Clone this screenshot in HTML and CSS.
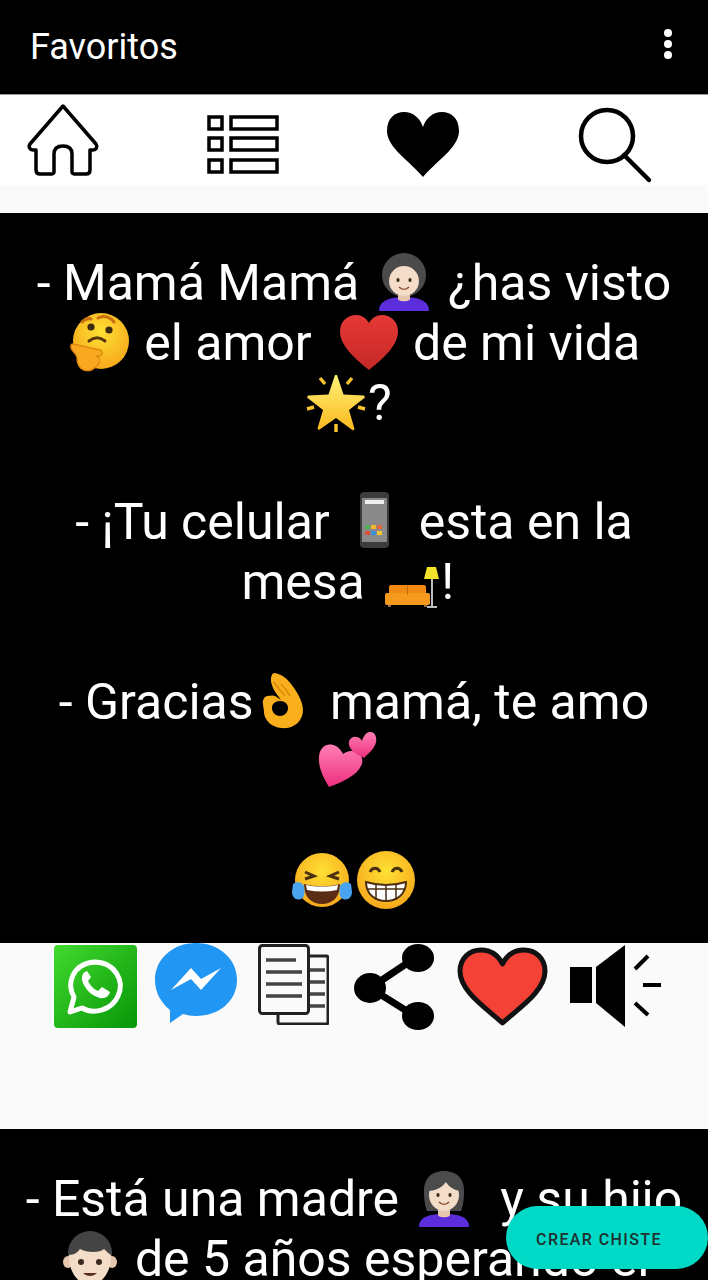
FILE: index.html
```html
<!DOCTYPE html>
<html lang="es">
<head>
    <meta charset="UTF-8">
    <title>Favoritos</title>
    <link rel="stylesheet" href="styles.css">
</head>
<body>
    <!-- emojis usados en los chistes -->
    <svg class="defs" aria-hidden="true">
        <defs>
            <radialGradient id="face-yellow" cx="50%" cy="35%" r="65%">
                <stop offset="0" stop-color="#fee133"/>
                <stop offset="1" stop-color="#f6a81c"/>
            </radialGradient>
            <linearGradient id="star-yellow" x1="0" y1="0" x2="0" y2="1">
                <stop offset="0" stop-color="#fff176"/>
                <stop offset="1" stop-color="#fbb91f"/>
            </linearGradient>
            <linearGradient id="heart-red" x1="0" y1="0" x2="0" y2="1">
                <stop offset="0" stop-color="#e53935"/>
                <stop offset="1" stop-color="#c62828"/>
            </linearGradient>
            <linearGradient id="heart-pink" x1="0" y1="0" x2="0" y2="1">
                <stop offset="0" stop-color="#ff7fb4"/>
                <stop offset="1" stop-color="#ec2f7f"/>
            </linearGradient>
            <linearGradient id="wa-green" x1="0" y1="0" x2="1" y2="1">
                <stop offset="0" stop-color="#43d92f"/>
                <stop offset="1" stop-color="#069607"/>
            </linearGradient>
            <symbol id="e-woman" viewBox="0 0 60 60">
                <path d="M5 58c0-10 10-14 25-14s25 4 25 14z" fill="#5b2ddb"/>
                <circle cx="30" cy="22" r="22" fill="#4b4b4b"/>
                <path d="M24 36h12v10c0 3-12 3-12 0z" fill="#e6c7ad"/>
                <ellipse cx="30" cy="28" rx="15" ry="15" fill="#f3dcc8"/>
                <ellipse cx="24" cy="27" rx="1.600" ry="2" fill="#3a2a20"/>
                <ellipse cx="36" cy="27" rx="1.600" ry="2" fill="#3a2a20"/>
                <path d="M25 34c3 3 7 3 10 0" fill="none" stroke="#8a4a35" stroke-width="1.600"/>
            </symbol>
            <symbol id="e-woman-long" viewBox="0 0 60 60">
                <path d="M5 58c0-10 10-13 25-13s25 3 25 13z" fill="#5b2ddb"/>
                <path d="M10 22C10 8 19 2 30 2s20 6 20 20c0 9-1 15-3 20H13c-2-5-3-11-3-20z" fill="#4b4b4b"/>
                <path d="M24 36h12v10c0 3-12 3-12 0z" fill="#e6c7ad"/>
                <ellipse cx="30" cy="26" rx="15" ry="16" fill="#f3dcc8"/>
                <path d="M14 22c6 0 14-3 18-9 3 5 8 8 14 9l1-8-14-8-17 4z" fill="#4b4b4b"/>
                <ellipse cx="24" cy="26" rx="1.600" ry="2" fill="#3a2a20"/>
                <ellipse cx="36" cy="26" rx="1.600" ry="2" fill="#3a2a20"/>
                <path d="M25 33c3 3 7 3 10 0" fill="none" stroke="#8a4a35" stroke-width="1.600"/>
            </symbol>
            <symbol id="e-boy" viewBox="0 0 60 60">
                <circle cx="30" cy="24" r="22" fill="#444"/>
                <ellipse cx="8" cy="33" rx="5" ry="6" fill="#e6c7ad"/>
                <ellipse cx="52" cy="33" rx="5" ry="6" fill="#e6c7ad"/>
                <path d="M9 26c5 0 9-3 11-6 7 4 20 4 24 0 3 3 5 5 7 6 1 14-8 30-21 30S8 40 9 26z" fill="#f3dcc8"/>
                <circle cx="21" cy="33" r="3" fill="#3a2a20"/>
                <circle cx="39" cy="33" r="3" fill="#3a2a20"/>
                <path d="M23 44c4 4 10 4 14 0z" fill="#5a2c20"/>
            </symbol>
            <symbol id="e-think" viewBox="0 0 60 60">
                <circle cx="31" cy="28" r="28" fill="url(#face-yellow)"/>
                <path d="M12 9c3-3 6-4 9-3M28 5c6-3 12-1 16 4" fill="none" stroke="#c96f12" stroke-width="3" stroke-linecap="round"/>
                <circle cx="21" cy="14" r="3.600" fill="#3b2b12"/>
                <circle cx="39" cy="17" r="3.600" fill="#3b2b12"/>
                <path d="M19 28c5-4 11-4 16 0" fill="none" stroke="#5a3512" stroke-width="3" stroke-linecap="round"/>
                <path d="M3 31l27 6c3 1 3 5 0 6l-4 0c4 1 4 5 3 7-3 6-10 9-15 7-6-2-7-9-7-13-1-4-7-7-6-11 0-2 1-2 2-2z" fill="#f8a91f" stroke="#e08a10" stroke-width="1.400"/>
            </symbol>
            <symbol id="e-heart" viewBox="0 0 60 60">
                <path d="M30 57C14 44 1 32 1 18 1 8 9 2 17 2c6 0 10 3 13 8 3-5 7-8 13-8 8 0 16 6 16 16 0 14-13 26-29 39z" fill="url(#heart-red)"/>
            </symbol>
            <symbol id="e-star" viewBox="0 0 60 60">
                <path d="M29 2h2l6.500 19.500L58 22.500l1 2-16 12.500 5.500 19-1.500 1.500L30 45 13 57l-1.500-1.500L17 37 1 24.500l1-2 20.500-1z" fill="url(#star-yellow)"/>
                <path d="M14 5l5 6M46 5l-5 6M1 36l7-2M59 36l-7-2M30 51v8" fill="none" stroke="#fdc42b" stroke-width="3.400"/>
            </symbol>
            <symbol id="e-phone" viewBox="0 0 60 60">
                <rect x="16" y="0" width="29" height="56" rx="4" fill="#3c3c3c"/>
                <rect x="18" y="6" width="25" height="44" fill="#8a8a8a"/>
                <rect x="21" y="8" width="19" height="4" fill="#eee"/>
                <path d="M21 33h5v4h-5z" fill="#4caf50"/>
                <path d="M27 33h5v4h-5z" fill="#f2b632"/>
                <path d="M33 33h5v4h-5z" fill="#e2683b"/>
                <path d="M21 39h5v4h-5z" fill="#d9503f"/>
                <path d="M27 39h5v4h-5z" fill="#3f8fd9"/>
                <path d="M33 39h5v4h-5z" fill="#f2c832"/>
            </symbol>
            <symbol id="e-couch" viewBox="0 0 60 60">
                <rect x="10" y="33" width="37" height="14" rx="2" fill="#f08a10"/>
                <rect x="6" y="41" width="45" height="12" rx="2" fill="#f59a1d"/>
                <path d="M28 33h1v10h-1z" fill="#c96d08"/>
                <path d="M9 53h3v2H9zM45 53h3v2h-3z" fill="#8a6a4a"/>
                <path d="M48 15h9l3 12H45z" fill="#f4e12a"/>
                <rect x="52" y="27" width="2" height="27" fill="#bdbdbd"/>
                <rect x="48" y="54" width="10" height="2" fill="#bdbdbd"/>
            </symbol>
            <symbol id="e-ok" viewBox="0 0 60 60">
                <path fill-rule="evenodd" d="M18 1c8 1 14 6 20 15 7 10 11 20 8 28-3 9-12 13-21 12-9-1-16-7-17-15 0-4-1-7-1-9-1-4 2-9 7-8 3-1 6 0 8 2l3 2c-2-3-8-10-9-15-2-5-1-11 2-12zM24 29c-5 0-8 3-8 7s3 8 8 8 8-4 8-8-3-7-8-7z" fill="#f9ae1b"/>
                <path d="M25 12c3 3 6 7 9 12M18 10c3 5 8 10 11 14" fill="none" stroke="#dc8a0c" stroke-width="1.500"/>
            </symbol>
            <symbol id="e-hearts" viewBox="0 0 60 60">
                <path d="M11 56C5 46 0 36 1 25c1-8 7-13 14-11 5 1 8 5 10 9 4-3 9-4 13-2 6 2 8 9 5 14-4 9-18 16-32 21z" fill="url(#heart-pink)"/>
                <path d="M46 27c-6-3-13-6-15-13-1-5 3-9 7-8 3 0 5 2 6 4 1-4 4-9 8-9 5 0 7 5 6 10-1 6-7 11-12 16z" fill="url(#heart-pink)"/>
            </symbol>
            <symbol id="e-joy" viewBox="0 0 60 60">
                <circle cx="30" cy="29" r="27" fill="url(#face-yellow)"/>
                <path d="M13 21l9 4-9 3M47 21l-9 4 9 3" fill="none" stroke="#4a2f10" stroke-width="3"/>
                <path d="M12 33c10 3 26 3 36 0 0 14-8 20-18 20s-18-6-18-20z" fill="#5a2c14"/>
                <path d="M14 34c10 2 22 2 32 0l-1 5c-10 2-20 2-30 0z" fill="#fff"/>
                <path d="M1 33c4-3 9-2 11 2 1 5 1 12-3 13-5 2-9-2-9-7zM59 33c-4-3-9-2-11 2-1 5-1 12 3 13 5 2 9-2 9-7z" fill="#4aa3ee"/>
            </symbol>
            <symbol id="e-grin" viewBox="0 0 60 60">
                <circle cx="30" cy="29" r="29" fill="url(#face-yellow)"/>
                <path d="M14 21c2-5 8-5 10 0M36 21c2-5 8-5 10 0" fill="none" stroke="#4a2f10" stroke-width="3"/>
                <path d="M10 31c13 4 27 4 40 0 0 12-9 19-20 19S10 43 10 31z" fill="#fff" stroke="#4a2f10" stroke-width="2"/>
                <path d="M11 38h38M20 34v15M30 35v16M40 34v15" stroke="#4a2f10" stroke-width="1.500"/>
            </symbol>
        </defs>
    </svg>

    <div class="toolbar">
        <span class="toolbar-title">Favoritos</span>
        <div class="menu-dots"><i></i><i></i><i></i></div>
    </div>

    <div class="nav-bar">
        <svg class="nav-icon" viewBox="0 0 72 72">
            <path d="M36 2L69 40c2 3 0 6-3 6h-3v20c0 3-2 4-4 4H47c-1 0-2-1-2-2V50c0-6-4-8-9-8s-9 2-9 8v18c0 1-1 2-2 2H13c-2 0-4-1-4-4V46H6c-3 0-5-3-3-6z" fill="none" stroke="#000" stroke-width="3.500" stroke-linejoin="round"/>
        </svg>
        <svg class="nav-icon" viewBox="0 0 72 72">
            <g fill="none" stroke="#000" stroke-width="3.500">
                <rect x="2" y="13" width="13" height="12"/>
                <rect x="2" y="34" width="13" height="12"/>
                <rect x="2" y="56" width="13" height="12"/>
                <rect x="24" y="13" width="46" height="12"/>
                <rect x="24" y="34" width="46" height="12"/>
                <rect x="24" y="56" width="46" height="12"/>
            </g>
        </svg>
        <svg class="nav-icon" viewBox="0 0 72 72">
            <path d="M36 73C24 58 0 44 0 27 0 14 8 8 17 8c9 0 16 6 19 15C39 14 46 8 55 8c9 0 17 6 17 19 0 17-24 31-36 46z"/>
        </svg>
        <svg class="nav-icon search-icon" viewBox="0 0 72 74">
            <circle cx="28" cy="28" r="26" fill="none" stroke="#000" stroke-width="4.500"/>
            <path d="M45 47l25 25" fill="none" stroke="#000" stroke-width="4.500" stroke-linecap="round"/>
        </svg>
    </div>

    <div class="joke-list">
        <div class="joke">
            <p class="joke-text">- Mamá Mamá <svg class="emoji"><use href="#e-woman"/></svg> ¿has visto<br>
            <svg class="emoji"><use href="#e-think"/></svg> el amor&nbsp; <svg class="emoji"><use href="#e-heart"/></svg> de mi vida<br>
            <svg class="emoji"><use href="#e-star"/></svg>?&nbsp;<br>
            <br>
            - ¡Tu celular <svg class="emoji"><use href="#e-phone"/></svg> esta en la<br>
            mesa <svg class="emoji"><use href="#e-couch"/></svg>!&nbsp;<br>
            <br>
            - Gracias<svg class="emoji"><use href="#e-ok"/></svg> mamá, te amo<br>
            <svg class="emoji"><use href="#e-hearts"/></svg>&nbsp;<br>
            <br>
            <svg class="emoji"><use href="#e-joy"/></svg><svg class="emoji"><use href="#e-grin"/></svg></p>
        </div>

        <div class="joke-actions">
            <svg class="act act-whatsapp" viewBox="0 0 83 83">
                <rect width="83" height="83" rx="4" fill="url(#wa-green)"/>
                <path d="M16 67l4-15c-8-14-1-33 20-35 21 0 31 19 24 34-6 14-24 19-36 12z" fill="none" stroke="#fff" stroke-width="5" stroke-linejoin="round"/>
                <path d="M31 27c-3 2-4 6-2 11 3 7 9 13 17 15 5 1 9-2 10-6l-8-5-4 4c-5-2-8-6-10-10l3-4-4-6z" fill="#fff"/>
            </svg>
            <svg class="act act-messenger" viewBox="0 0 82 80">
                <path d="M41 0c23 0 41 16 41 37S64 73 41 73c-5 0-9-1-13-2L15 80V67C6 60 0 49 0 37 0 16 18 0 41 0z" fill="#2196f3"/>
                <path d="M16 47l20-22 10 11 20-11-20 22-10-11z" fill="#fff"/>
            </svg>
            <svg class="act act-doc" viewBox="0 0 71 81">
                <rect x="20" y="12" width="50" height="68" rx="2" fill="#fafafa" stroke="#222" stroke-width="3"/>
                <path d="M50 26h17M50 38h17M50 50h17M50 62h17" stroke="#444" stroke-width="3.500"/>
                <rect x="1.500" y="1.500" width="49" height="68" rx="3" fill="#fafafa" stroke="#222" stroke-width="3"/>
                <path d="M8 16h30M8 28h36M8 40h36M8 52h36" stroke="#444" stroke-width="3.500"/>
            </svg>
            <svg class="act act-share" viewBox="0 0 80 86">
                <path d="M64 12L16 44l48 30" fill="none" stroke="#000" stroke-width="7"/>
                <ellipse cx="64" cy="14" rx="16" ry="14"/>
                <ellipse cx="16" cy="44" rx="16" ry="15"/>
                <ellipse cx="64" cy="72" rx="16" ry="14"/>
            </svg>
            <svg class="act act-heart" viewBox="0 0 91 80">
                <path d="M45.500 76C28 60 3 44 3 24 3 11 13 3 24 3c9 0 17 5 21.500 14C50 8 58 3 67 3c11 0 21 8 21 21 0 20-25 36-42.500 52z" fill="#f44336" stroke="#111" stroke-width="5" stroke-linejoin="round"/>
            </svg>
            <svg class="act act-speaker" viewBox="0 0 92 82">
                <rect x="0" y="22" width="22" height="36"/>
                <path d="M26 22L55 0v82L26 58z"/>
                <path d="M65 24l13-13M73 40h18M65 58l13 12" fill="none" stroke="#000" stroke-width="4"/>
            </svg>
        </div>

        <div class="joke">
            <p class="joke-text">- Está una madre <svg class="emoji"><use href="#e-woman-long"/></svg>&nbsp; y su hijo<br>
            <svg class="emoji"><use href="#e-boy"/></svg> de 5 años esperando el</p>
        </div>
    </div>

    <button class="fab">CREAR CHISTE</button>
</body>
</html>
```

FILE: styles.css
```css
html, body {
    height: 1280px;
}

body {
    font-family: Roboto, "Noto Sans", sans-serif;
    margin: 0;
    padding: 0;
    overflow: hidden;
    position: relative;
    background-color: #fafafa;
}

.defs {
    display: block;
    width: 0;
    height: 0;
}

/* barra superior */
.toolbar {
    background-color: #000;
    color: #fff;
    height: 94px;
    padding: 0 36px 0 30px;
    display: flex;
    justify-content: space-between;
    align-items: center;
    box-sizing: border-box;
}

.toolbar-title {
    font-size: 36px;
}

.menu-dots {
    display: flex;
    flex-direction: column;
    gap: 3px;
    margin-bottom: 6px;
}

.menu-dots i {
    display: block;
    width: 8px;
    height: 8px;
    border-radius: 50%;
    background-color: #fff;
}

/* iconos de navegacion */
.nav-bar {
    background-color: #fff;
    border-top: 1px solid #999;
    height: 91px;
    box-sizing: border-box;
    padding: 9px 0 0 27px;
    display: flex;
    gap: 108px;
    align-items: flex-start;
}

.nav-icon {
    width: 72px;
    height: 72px;
    overflow: visible;
}

.search-icon {
    height: 74px;
    margin-left: 12px;
    margin-top: 4px;
}

.joke-list {
    padding-top: 28px;
}

.joke {
    background-color: #000;
    color: #fff;
    padding: 41px 0 31px;
}

.joke-text {
    margin: 0;
    font-size: 50px;
    line-height: 59.8px;
    text-align: center;
    white-space: nowrap;
}

.emoji {
    width: 60px;
    height: 60px;
    vertical-align: -13px;
    margin: -6px 2px 0;
}

/* botones de cada chiste */
.joke-actions {
    height: 186px;
    box-sizing: border-box;
    padding-left: 54px;
    display: flex;
    align-items: flex-start;
}

.act {
    display: block;
    flex: none;
}

.act-whatsapp {
    width: 83px;
    height: 83px;
    margin: 2px 18px 0 0;
}

.act-messenger {
    width: 82px;
    height: 80px;
    margin-right: 21px;
}

.act-doc {
    width: 71px;
    height: 81px;
    margin: 1px 25px 0 0;
}

.act-share {
    width: 80px;
    height: 86px;
    margin: 1px 23px 0 0;
}

.act-heart {
    width: 91px;
    height: 80px;
    margin: 4px 22px 0 0;
}

.act-speaker {
    width: 92px;
    height: 82px;
    margin-top: 2px;
}

/* boton flotante */
.fab {
    position: absolute;
    right: 0;
    top: 1206px;
    width: 202px;
    height: 63px;
    padding: 4px 16px 0 0;
    border: none;
    border-radius: 32px;
    background-color: #00d9c5;
    color: #1f3030;
    font-family: Roboto, sans-serif;
    font-size: 16px;
    font-weight: 500;
    letter-spacing: 1.4px;
}
```
